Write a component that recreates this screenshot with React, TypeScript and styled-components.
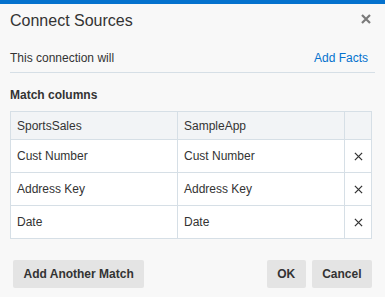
import React from "react";
import styled, { createGlobalStyle } from "styled-components";

const Global = createGlobalStyle`
  html, body { margin: 0; padding: 0; background: #f8f8f8; }
  body { font-family: "Liberation Sans", Arial, sans-serif; color: #333333; }
  * { box-sizing: border-box; }
`;

const Dialog = styled.div`
  width: 385px;
  height: 297px;
  background: #f8f8f8;
  border-top: 4px solid #0572ce;
  display: flex;
  flex-direction: column;
  overflow: hidden;
`;

const Header = styled.div`
  display: flex;
  justify-content: space-between;
  align-items: flex-start;
  padding: 6px 14px 0 10px;
`;

const Title = styled.h1`
  margin: 0;
  font-size: 16px;
  line-height: 21px;
  font-weight: normal;
  color: #333333;
`;

const CloseButton = styled.button`
  margin-top: 4px;
  width: 10px;
  height: 10px;
  padding: 0;
  border: 0;
  background: none;
  display: flex;
  cursor: pointer;
`;

const InfoRow = styled.div`
  margin: 19px 10px 0 10px;
  padding: 0 7px 6px 0;
  border-bottom: 1px solid #d6dfe6;
  display: flex;
  justify-content: space-between;
  font-size: 12px;
  line-height: 16px;
`;

const Link = styled.a`
  color: #0572ce;
  text-decoration: none;
  cursor: pointer;
`;

const SectionLabel = styled.div`
  margin: 14px 10px 0 10px;
  font-size: 12px;
  line-height: 16px;
  font-weight: bold;
`;

const Grid = styled.div`
  margin: 8px 0 0 10px;
  width: 362px;
  display: grid;
  grid-template-columns: 167px 167px 27px;
  border-top: 1px solid #d6dfe6;
  border-left: 1px solid #d6dfe6;
`;

const Cell = styled.div<{ $head?: boolean; $center?: boolean }>`
  height: ${(p) => (p.$head ? "28px" : "33px")};
  border-right: 1px solid #d6dfe6;
  border-bottom: 1px solid #d6dfe6;
  background: ${(p) => (p.$head ? "#f2f4f6" : "#ffffff")};
  display: flex;
  align-items: center;
  justify-content: ${(p) => (p.$center ? "center" : "flex-start")};
  padding: ${(p) => (p.$center ? "0" : "0 6px")};
  font-size: 12px;
  color: #333333;
`;

const Footer = styled.div`
  margin-top: 21px;
  padding: 0 13px;
  display: flex;
  align-items: center;
`;

const Spacer = styled.div`
  flex: 1;
`;

const Button = styled.button`
  height: 28px;
  padding: 0 10.5px;
  border: 0;
  border-radius: 2px;
  background: #e4e4e4;
  font-family: "Liberation Sans", Arial, sans-serif;
  font-size: 12px;
  font-weight: bold;
  color: #333333;
  cursor: pointer;
  & + & {
    margin-left: 6px;
  }
`;

const DeleteButton = styled.button`
  width: 9px;
  height: 9px;
  padding: 0;
  border: 0;
  background: none;
  display: flex;
  cursor: pointer;
`;

const XIcon = ({ size, color, width }: { size: number; color: string; width: number }) => (
  <svg width={size} height={size} viewBox="0 0 10 10">
    <path d="M1 1 L9 9 M9 1 L1 9" stroke={color} strokeWidth={width} strokeLinecap="butt" fill="none" />
  </svg>
);

const rows = [
  ["Cust Number", "Cust Number"],
  ["Address Key", "Address Key"],
  ["Date", "Date"],
];

export default function App() {
  return (
    <>
      <Global />
      <Dialog>
        <Header>
          <Title>Connect Sources</Title>
          <CloseButton aria-label="Close">
            <XIcon size={10} color="#7a7a7a" width={2.2} />
          </CloseButton>
        </Header>
        <InfoRow>
          <span>This connection will</span>
          <Link>Add Facts</Link>
        </InfoRow>
        <SectionLabel>Match columns</SectionLabel>
        <Grid>
          <Cell $head>SportsSales</Cell>
          <Cell $head>SampleApp</Cell>
          <Cell $head />
          {rows.map(([a, b], i) => (
            <React.Fragment key={i}>
              <Cell>{a}</Cell>
              <Cell>{b}</Cell>
              <Cell $center>
                <DeleteButton aria-label="Remove">
                  <XIcon size={9} color="#333333" width={1.4} />
                </DeleteButton>
              </Cell>
            </React.Fragment>
          ))}
        </Grid>
        <Footer>
          <Button>Add Another Match</Button>
          <Spacer />
          <Button>OK</Button>
          <Button>Cancel</Button>
        </Footer>
      </Dialog>
    </>
  );
}
